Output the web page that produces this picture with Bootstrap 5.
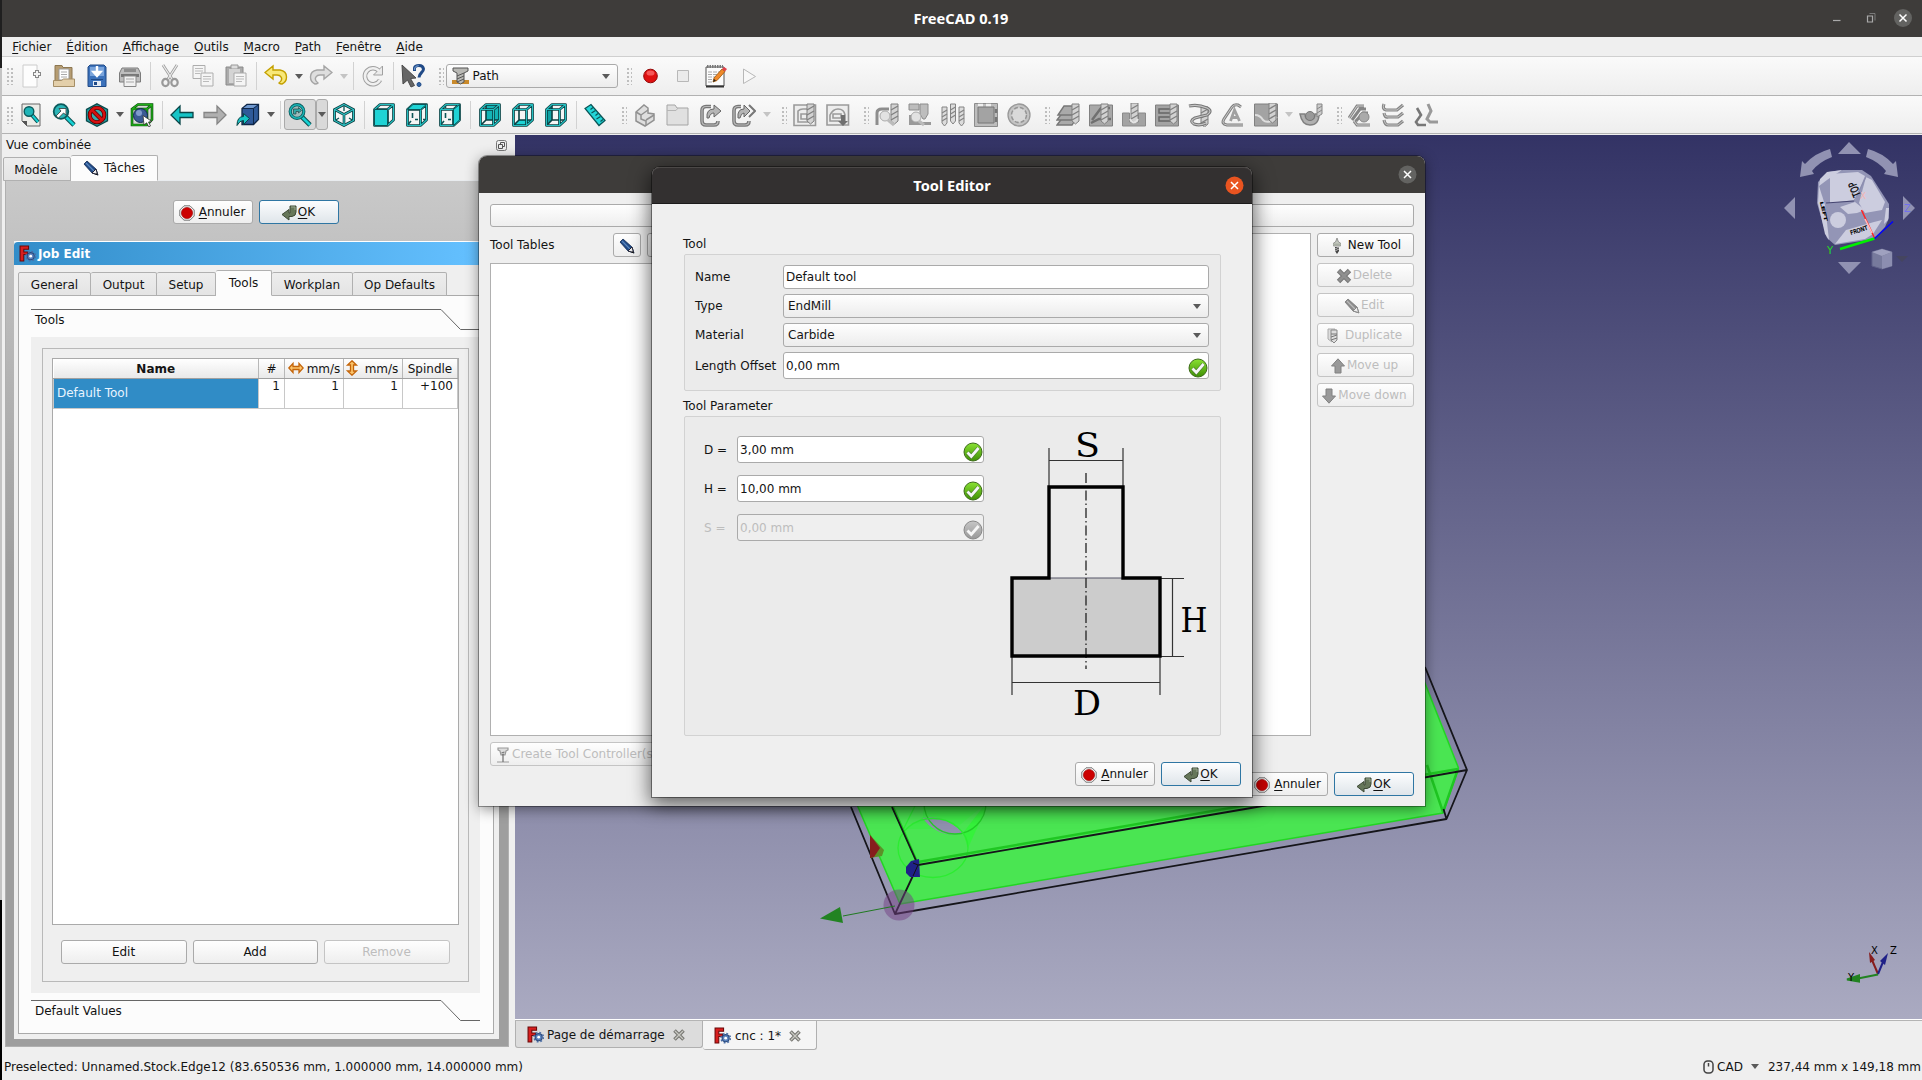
<!DOCTYPE html>
<html lang="fr">
<head>
<meta charset="utf-8">
<meta name="viewport" content="width=device-width, initial-scale=1">
<title>FreeCAD 0.19</title>
<link href="https://cdn.jsdelivr.net/npm/bootstrap@5.3.0/dist/css/bootstrap.min.css" rel="stylesheet">
<style>
html,body{height:100%;overflow:hidden}
body{font:12px/16px "DejaVu Sans",sans-serif;color:#141414;background:#efefef;width:1922px;height:1080px}
u{text-underline-offset:2px}
svg{display:block;flex:none}
.edge-strip{width:2px;background:linear-gradient(#1f1f1f 0 68px,#c4c4c4 68px 900px,#000 900px)}
.title-bar{height:37px;background:#3e3c3a;color:#fff;font:bold 14.6px/37px "Noto Sans",sans-serif;position:relative;text-align:center}
.menu-row{height:20px;border-bottom:1px solid #cfcfcf;padding-left:3px}
.menu-row span{padding:1px 7.7px 0 7.2px}
.tool-row{background:linear-gradient(#fafafa,#eee);border-bottom:1px solid #b2b2b2}
.tool-row.r1{height:39px}.tool-row.r2{height:38px}
.ic{width:33px;display:flex;justify-content:center;align-items:center;flex:none}
.ic svg{width:24px;height:24px}
.sp{width:7px;flex:none;height:28px;background:linear-gradient(#d2d2d2,#d2d2d2) 3px 0/1px 100% no-repeat}
.ar{width:12px;flex:none;display:flex;justify-content:center}
.ar::before,.caret::before{content:"";border:4px solid transparent;border-top:5px solid #5a5a5a;border-bottom:0}
.ar.off::before{border-top-color:#c4c4c4}
.hd{width:16px;flex:none;height:18px;background:radial-gradient(circle,#aaa 0 .6px,transparent 1px) 8px 0/4px 4px;background-clip:content-box;padding-left:8px;padding-right:2px}
.hd.first{width:12.5px;padding-left:4px;background-position:4px 0}
.pressed{background:#d9d9d9;border:1px solid #aaa;height:31px;border-radius:3px}
.qbtn.btn{height:24px;padding:1px 1px 0 0;font-size:12px;line-height:21px;border:1px solid #aaa;border-radius:3px;background:linear-gradient(#fefefe,#eee);color:#111;display:flex;align-items:center;justify-content:center;gap:1px;flex:none;opacity:1}
.qbtn.btn.off{color:#bdbdbd;border-color:#c4c4c4}
.qbtn.btn.dflt{border-color:#2f76a3;background:linear-gradient(#fcfdfe,#dfe5ea)}
.w80{width:80px}
.gap-icon{margin-right:3px}
.combo{border:1px solid #aaa;border-radius:3px;background:linear-gradient(#fefefe,#ececec);display:flex;align-items:center}
.caret{margin-left:auto;margin-right:7px;display:flex}
.fld{border:1px solid #aaa;border-radius:3px;background:#fff;display:flex;align-items:center;padding-left:2px}
.side{width:513px;flex:none}
.qtab{border:1px solid #b0b0b0;border-left-width:0;background:linear-gradient(#ededed,#e4e4e4);display:flex;align-items:center;justify-content:center;flex:none;height:24px;padding-top:1px;border-radius:2px 2px 0 0}
.qtab.first{border-left-width:1px}
.qtab.on{background:#fcfcfc;border-bottom-color:#fcfcfc;height:26px;padding:0 0 1px}
.task-area{border:1px solid #b0b0b0;background:linear-gradient(#c9c9c9,#9e9e9e 45%,#9e9e9e);height:867px;margin:0 6px 0 3px}
.job-head{height:24px;background:linear-gradient(90deg,#328dc9,#64c0ff 95%);border-top:1px solid #fff;border-radius:4px 4px 0 0;color:#fff;font-weight:bold;font-size:12px}
.job-card{width:485px;height:798px;background:#efefef;margin:17px 0 0 8px}
.pane{width:476px;height:739px;background:#fcfcfc;border:1px solid #aaa;margin:-1px 0 0 4px}
.page-box{width:449px;height:656px;background:#efefef;margin:7px 0 0 12px;padding:11px}
.page-frame{width:427px;height:634px;border:1px solid #b9b9b9;padding:9px}
.tool-table{width:407px;height:567px;background:#fff;border:1px solid #aaa}
.tool-table table{width:404px;table-layout:fixed;border-collapse:collapse}
.tool-table th{height:19px;border-right:1px solid #b8b8b8;border-bottom:1px solid #a0a0a0;background:linear-gradient(#fff,#e9e9e9);font-weight:normal;text-align:center;padding:1px 0 0;line-height:17px;white-space:nowrap}
.tool-table th svg{display:inline-block;vertical-align:-3px;margin-right:3px}
.tool-table td{height:30px;border:1px solid #c8c8c8;border-top:0;padding:0 4px 0 0;line-height:15px;text-align:right;vertical-align:top}
.tool-table td:first-child{background:#308cc6;color:#e8f4ff;text-align:left;vertical-align:middle;padding-left:3px}
.view-box{background:linear-gradient(#333365,#aaaac1)}
.doc-tabs{height:30px;border-top:1px solid #b4b4b4}
.doc-tab{border:1px solid #b0b0b0;border-top:0;height:27px;background:#dcdcdc;display:flex;align-items:center;flex:none;padding:1px 0 0 11px;border-radius:0 0 3px 3px}
.doc-tab.on{background:#f5f5f5;height:29px;border-left:0}
.status-row{height:30px;padding:3px 1px 0 2px}
.win{position:absolute;background:#efefef;border-radius:8px 8px 0 0}
.win-tables{left:479px;top:156px;width:946px;height:650px;box-shadow:0 0 0 1px rgba(0,0,0,.35),0 3px 14px rgba(0,0,0,.45)}
.win-tables .title-bar,.win-editor .title-bar{border-radius:8px 8px 0 0}
.win-editor{left:652px;top:167px;width:600px;height:630px;box-shadow:0 0 0 1px rgba(0,0,0,.4),0 6px 20px 2px rgba(0,0,0,.6)}
.win-editor .title-bar{background:#333030;border-bottom:1px solid #1c1b1b;box-shadow:inset 0 1px #4b4847}
.close-dot{position:absolute;right:8.5px;top:8.500px}
.win-ctl{position:absolute;right:10px;top:8px}
.whitebox{background:#fff;border:1px solid #b0b0b0}
.grp{background:#ebebeb;border:1px solid #d2d2d2;border-radius:2px;width:537px}
</style>
<script src="https://cdn.jsdelivr.net/npm/bootstrap@5.3.0/dist/js/bootstrap.bundle.min.js"></script>
</head>
<body class="d-flex">
<svg width="0" height="0" style="position:absolute" aria-hidden="true">
<defs>
<linearGradient id="grn" x2="0" y2="1"><stop stop-color="#8ae234"/><stop offset="1" stop-color="#3f8f04"/></linearGradient>
<linearGradient id="gry" x2="0" y2="1"><stop stop-color="#c6c6c6"/><stop offset="1" stop-color="#989898"/></linearGradient>
</defs>
<symbol id="i-stop" viewBox="0 0 16 16"><path d="M5 .8h6L15.200 5v6L11 15.200H5L.8 11V5z" fill="#f2f2f2" stroke="#777"/><circle cx="8" cy="8" r="5.600" fill="#cc0000" stroke="#900" stroke-width=".6"/></symbol>
<symbol id="i-ok" viewBox="0 0 16 16"><path d="M9 1h6v6q0 4-4 4.500H8v3.500L1 9.500l7-5V8h1z" fill="#66775a" stroke="#3e4a37"/><path d="M10 2h4v3" fill="none" stroke="#9aa890"/></symbol>
<symbol id="i-pencil" viewBox="0 0 16 16"><path d="M1 4l3-3 9 8 2 6-6-2z" fill="#204a87" stroke="#102a50" stroke-width=".8"/><path d="M3 3l8 8" stroke="#5a87bd" stroke-width="1.200"/><path d="M9 13l4-4 1.600 5.600z" fill="#eee" stroke="#223"/><path d="M13 13l2.500 2.500-3-1z" fill="#111"/></symbol>
<symbol id="i-pencilg" viewBox="0 0 16 16"><path d="M1 4l3-3 9 8 2 6-6-2z" fill="#8c8c8c" stroke="#777" stroke-width=".8"/><path d="M3 3l8 8" stroke="#bbb" stroke-width="1.200"/><path d="M9 13l4-4 1.600 5.600z" fill="#eee" stroke="#888"/></symbol>
<symbol id="i-fc" viewBox="0 0 16 16"><path d="M1 1h8v3H4.500v2.500H8V9H4.500v6H1z" fill="#d81e1e" stroke="#6b0808"/><circle cx="11" cy="10.500" r="3.300" fill="#5b82bd" stroke="#2b4a7c"/><circle cx="11" cy="10.500" r="4.400" fill="none" stroke="#4a6da5" stroke-width="1.500" stroke-dasharray="1.730 1.730"/><circle cx="11" cy="10.500" r="1.300" fill="#fff"/></symbol>
<symbol id="i-check" viewBox="0 0 20 20"><circle cx="10" cy="10" r="9" fill="url(#grn)" stroke="#3d6b1a"/><path d="M4.500 10.500l3.800 4 7.300-8.500" fill="none" stroke="#4a7a30" stroke-width="4"/><path d="M4.500 10.500l3.800 4 7.300-8.500" fill="none" stroke="#f6f6f6" stroke-width="2.800"/></symbol>
<symbol id="i-checkg" viewBox="0 0 20 20"><circle cx="10" cy="10" r="9" fill="url(#gry)" stroke="#888"/><path d="M4.500 10.500l3.800 4 7.300-8.500" fill="none" stroke="#f6f6f6" stroke-width="2.800"/></symbol>
<symbol id="i-x" viewBox="0 0 12 12"><path d="M1.500 1.500l9 9M10.500 1.500l-9 9" stroke="#777772" stroke-width="3.600"/><path d="M2 2l8 8M10 2l-8 8" stroke="#c8c8c2" stroke-width="1.300"/></symbol>
<symbol id="bit" viewBox="0 0 24 24"><path d="M14 1h7v17l-3.500 3L14 18z" fill="#d2d2d2" stroke="#808080"/><path d="M14 7l7-4M14 12l7-4M14 17l7-4" stroke="#808080" stroke-width="1.400"/></symbol>
<symbol id="wire" viewBox="0 0 24 24"><g fill="none" stroke-linejoin="round"><path d="M2.500 6.500h13v16h-13zM2.500 6.500l5.500-5h13.500v15.500l-6 5.500M15.500 6.500l6-5" stroke="#0a4042" stroke-width="2.700"/><path d="M2.500 6.500h13v16h-13zM2.500 6.500l5.500-5h13.500v15.500l-6 5.500M15.500 6.500l6-5" stroke="#25bfc1" stroke-width="1.100"/></g></symbol>
<symbol id="wireback" viewBox="0 0 24 24"><path d="M8 2v15h13M8 17l-5 5" fill="none" stroke="#0a4042" stroke-width="1.600"/></symbol>
</svg>

<div class="edge-strip"></div>
<div class="d-flex flex-column flex-grow-1">
  <header class="title-bar" style="padding-right:2px">FreeCAD 0.19
    <svg class="win-ctl" width="80" height="20" viewBox="0 0 80 20"><path d="M1 12.500h7.500" stroke="#aaa" stroke-width="1.200"/><path d="M35.500 8h5v6h-5z" fill="none" stroke="#aaa" stroke-width="1.200"/><path d="M37.500 5.500h5.500v7" fill="none" stroke="#888" stroke-width=".8"/><circle cx="71" cy="10" r="9" fill="#636361"/><path d="M67.500 6.500l7 7M74.500 6.500l-7 7" stroke="#fff" stroke-width="1.500"/></svg>
  </header>
  <nav class="menu-row d-flex align-items-center"><span><u>F</u>ichier</span><span><u>É</u>dition</span><span><u>A</u>ffichage</span><span><u>O</u>utils</span><span><u>M</u>acro</span><span><u>P</u>ath</span><span><u>F</u>enêtre</span><span><u>A</u>ide</span></nav>

  <div class="tool-row r1 d-flex align-items-center">
    <i class="hd first"></i>
    <span class="ic"><svg viewBox="0 0 24 24"><path d="M4 1h14v22H4z" fill="#fdfdfd" stroke="#ccc"/><path d="M18 6v8M14 10h8" stroke="#888" stroke-width="4"/><path d="M18 7v6M15 10h6" stroke="#f4f4f4" stroke-width="2"/></svg></span>
    <span class="ic"><svg viewBox="0 0 24 24"><path d="M3 1.500h7l1 2h9V20H3z" fill="#b59c72" stroke="#8d7750"/><path d="M7 5h10v11H7z" fill="#fff" stroke="#999"/><path d="M9 8h6M9 10.500h6M9 13h6" stroke="#aaa"/><path d="M1.500 22.500v-6h8l2-1.500h11v7.500z" fill="#e3cfaa" stroke="#a58e66"/></svg></span>
    <span class="ic"><svg viewBox="0 0 24 24"><path d="M3 3l2-2h14l2 2v19.500H3z" fill="#3c72bb" stroke="#204a87"/><path d="M5 3h14v9H5z" fill="#7aa4db"/><path d="M12 2v7M8.500 8l3.500 4 3.500-4z" fill="#fff" stroke="#fff" stroke-width="2.400"/><path d="M6 15.500h12" stroke="#204a87"/><path d="M8 17h8v5H8z" fill="#e6ecf5"/><path d="M9 18h3v3H9z" fill="#204a87"/></svg></span>
    <span class="ic"><svg viewBox="0 0 24 24"><path d="M4 4h16l2.500 5v9h-21V9z" fill="#bdbdbd" stroke="#7b7b7b"/><path d="M6 5h12v3H6z" fill="#8d8d8d"/><path d="M3 10h18v3H3z" fill="#777"/><path d="M6 12h12v10.500H6z" fill="#f1f1f1" stroke="#888"/><path d="M8 15h8M8 18h8" stroke="#ccc" stroke-width="2"/></svg></span>
    <i class="sp"></i>
    <span class="ic"><svg viewBox="0 0 24 24"><path d="M5 1l9 14M19 1l-9 14" stroke="#9d9d9d" stroke-width="2.800"/><path d="M5 1l9 14M19 1l-9 14" stroke="#eee" stroke-width="1.200"/><g fill="none" stroke="#999" stroke-width="2.200"><ellipse cx="7.500" cy="18.500" rx="3.200" ry="3.600"/><ellipse cx="16.500" cy="18.500" rx="3.200" ry="3.600"/></g></svg></span>
    <span class="ic"><svg viewBox="0 0 24 24"><g fill="#f5f5f5" stroke="#adadad"><path d="M2 1.500h12v13H2z"/><path d="M10 9h12v13H10z"/></g><path d="M4 4.500h8M4 7h8M4 9.500h5M12 12.500h8M12 15h8M12 17.500h6" stroke="#bbb"/></svg></span>
    <span class="ic"><svg viewBox="0 0 24 24"><path d="M2 3h17v18H2z" fill="#ababab" stroke="#8a8a8a"/><path d="M7 1h7v4H7z" fill="#ddd" stroke="#999"/><path d="M5 5h11v14H5z" fill="#d4d4d4"/><path d="M10 9h12v13H10z" fill="#f5f5f5" stroke="#aaa"/><path d="M12 12.500h8M12 15h8M12 17.500h6" stroke="#bbb"/></svg></span>
    <i class="sp"></i>
    <span class="ic"><svg viewBox="0 0 24 24"><path d="M1 8.500L9 2v4h7q6.500 1 6.500 7 0 5-4.500 7-2 0-3-1 4-3 2-6-1-2-4-2H9v4z" fill="#f8e878" stroke="#c4a000" stroke-width="1.400"/></svg></span>
    <i class="ar"></i>
    <span class="ic"><svg viewBox="0 0 24 24"><path d="M23 8.500L15 2v4H8q-6.500 1-6.500 7 0 5 4.500 7 2 0 3-1-4-3-2-6 1-2 4-2h4v4z" fill="#dedede" stroke="#a5a5a5" stroke-width="1.400"/></svg></span>
    <i class="ar off"></i><i class="sp"></i>
    <span class="ic"><svg viewBox="0 0 24 24"><path d="M19 16a8 8 0 1 1-1-9" fill="none" stroke="#a0a0a0" stroke-width="4.600"/><path d="M21.500 2v9h-9z" fill="#ebebeb" stroke="#a0a0a0"/><path d="M19 16a8 8 0 1 1-1-9" fill="none" stroke="#f0f0f0" stroke-width="2.600"/></svg></span>
    <i class="sp"></i>
    <span class="ic"><svg viewBox="0 0 24 24"><path d="M1 1l14 13-5.500.500 4 7-3.500 1.500-3.500-7-4.500 4z" fill="#666" stroke="#4a4a4a"/><path d="M13.500 7V4q.500-2.500 4.500-2.500t4.500 3.500c0 3.500-4.500 4-4.500 8.500" fill="none" stroke="#204a87" stroke-width="3"/><path d="M13.700 6V4q.500-2.300 4-2.300" fill="none" stroke="#7da7dc" stroke-width="1"/><circle cx="18" cy="20.500" r="2" fill="#3465a4" stroke="#204a87"/></svg></span>
    <i class="hd"></i>
    <div class="combo" style="width:172px;height:24px"><svg width="17" height="18" viewBox="0 0 17 18" style="margin:0 4px 0 5px"><path d="M0 13h17v4H0z" fill="#c98a2b"/><path d="M1 1h15v3l-4 2v9l-3.500 2L5 15V6L1 4z" fill="#b9b9b5" stroke="#555"/><path d="M5 9l7-3M5 12l7-3M5 15l7-3" stroke="#555"/></svg>Path<i class="caret"></i></div>
    <i class="hd"></i>
    <span class="ic"><svg viewBox="0 0 24 24"><circle cx="12.500" cy="12" r="6.800" fill="#df1010" stroke="#930707"/><ellipse cx="12.500" cy="9" rx="4" ry="2.600" fill="#f77" opacity=".7"/></svg></span>
    <span class="ic"><svg viewBox="0 0 24 24"><path d="M6.500 6.500h11v11h-11z" fill="#ebebeb" stroke="#b8b8b8"/></svg></span>
    <span class="ic"><svg viewBox="0 0 24 24"><path d="M2 3h18v19H2z" fill="#fcfcfc" stroke="#555"/><path d="M2 22.500h18" stroke="#333" stroke-width="2"/><path d="M3 2.500h16" stroke="#777" stroke-width="3" stroke-dasharray="1.500 1"/><path d="M4 8h13M4 10.500h13M4 13h10M4 15.500h9M4 18h5" stroke="#aaa" stroke-dasharray="4 1"/><path d="M9 18l1-4 8-9 3 2.500-8 9z" fill="#f0892a" stroke="#9a5708" stroke-width=".8"/><path d="M18 5l2-2 3 2-2 2.500z" fill="#e2404a"/><path d="M9 18l1-3 2 1.500z" fill="#222"/></svg></span>
    <span class="ic"><svg viewBox="0 0 24 24"><path d="M6.500 5v14.500l12-7z" fill="#f8f8f8" stroke="#b8b8b8"/></svg></span>
  </div>

  <div class="tool-row r2 d-flex align-items-center">
    <i class="hd first"></i>
    <span class="ic"><svg viewBox="0 0 24 24"><path d="M3 1h18v22H8l-5-5z" fill="#ecece8" stroke="#666"/><path d="M3 18h5v5" fill="#555"/><path d="M13 12l6 7" stroke="#0b4a4c" stroke-width="4"/><path d="M13 12l6 7" stroke="#16d0d2" stroke-width="2"/><circle cx="10" cy="8.500" r="4.800" fill="#1fb4b6" stroke="#0b5a5c" stroke-width="1.400"/></svg></span>
    <span class="ic"><svg viewBox="0 0 24 24"><path d="M14 14l8 8" stroke="#0b4a4c" stroke-width="4.600"/><path d="M14 14l8 8" stroke="#16d0d2" stroke-width="2.600"/><circle cx="9" cy="8.500" r="7.300" fill="#2bb5b7" stroke="#0b5a5c" stroke-width="1.800"/><path d="M4 13l5-5-2-2.500h7V12l-2.500-2-5 5z" fill="#fff" stroke="#333" stroke-width=".8"/></svg></span>
    <span class="ic"><svg viewBox="0 0 24 24"><path d="M12 .8l10.500 5.500v11.500L12 23.300 1.500 17.800V6.300z" fill="#1fa3a5" stroke="#0b4a4c" stroke-width="1.300"/><circle cx="12" cy="12" r="7.300" fill="#38a9ab" stroke="#5b0000" stroke-width="4"/><path d="M7 7l10 10" stroke="#5b0000" stroke-width="4.200"/><circle cx="12" cy="12" r="7.300" fill="none" stroke="#d61010" stroke-width="2.400"/><path d="M7 7l10 10" stroke="#d61010" stroke-width="2.600"/></svg></span>
    <i class="ar"></i>
    <span class="ic"><svg viewBox="0 0 24 24"><path d="M2 6l6-4.500h14v15l-5 5.500H2z" fill="#d8ddd8"/><path d="M2 6l6-4.500h14v15l-5 5.500H2zM2 6h15v16M17 6l5-4.500" fill="none" stroke="#0f4a10" stroke-width="2.600"/><path d="M2 6l6-4.500h14v15l-5 5.500H2zM2 6h15v16M17 6l5-4.500" fill="none" stroke="#1eb017" stroke-width="1.300"/><circle cx="10.500" cy="12.500" r="7" fill="#3b5b95" stroke="#13294f"/><circle cx="9" cy="10" r="3" fill="#819bcc"/><path d="M13 12.500l9 6-3.500.500 2 4-1.800.800-2-4-2.700 2z" fill="#fff" stroke="#333" stroke-width=".8"/></svg></span>
    <i class="sp"></i>
    <span class="ic"><svg viewBox="0 0 24 24"><path d="M1 12l9-9v6.500h13v5H10V21z" fill="#16c4c6" stroke="#0a4547" stroke-width="1.300"/></svg></span>
    <span class="ic"><svg viewBox="0 0 24 24"><path d="M23 12l-9-9v6.500H1v5h13V21z" fill="#b0b0b0" stroke="#858585" stroke-width="1.300"/></svg></span>
    <span class="ic"><svg viewBox="0 0 24 24"><path d="M6 5.500l5-4h11.500v15l-5 5H6z" fill="#2f5a99" stroke="#0f2748" stroke-width="1.300"/><path d="M6 5.500h11.500v16M17.500 5.500l5-4" stroke="#0f2748" fill="none"/><path d="M7.500 5l4-3h9.500l-4 3z" fill="#6f98cf"/><path d="M1 22.500q0-9 6.500-9v-3l6 5-6 6v-4q-4 0-6.500 5z" fill="#16c4c6" stroke="#0a4547"/></svg></span>
    <i class="ar"></i><i class="sp"></i>
    <span class="ic pressed" style="width:32px"><svg viewBox="0 0 24 24"><path d="M14 14l8 8" stroke="#0b4a4c" stroke-width="4.600"/><path d="M14 14l8 8" stroke="#16d0d2" stroke-width="2.600"/><circle cx="9" cy="8.500" r="6.800" fill="#9fbcbc" stroke="#0b5a5c" stroke-width="3.200"/><circle cx="9" cy="8.500" r="6.800" fill="none" stroke="#19b5b7" stroke-width="1.600"/><path d="M5.500 6h5V4.500l3 3-3 2.500V8.500H8v2.500H5.500z" fill="#3aa" stroke="#244" stroke-width=".7"/></svg></span>
    <i class="ar pressed align-items-center"></i>
    <span class="ic"><svg viewBox="0 0 24 24"><path d="M12 1.500l9.500 5v11l-9.500 5-9.500-5v-11z" fill="#f6f6f6" stroke="#0a3a3c" stroke-width="2.800"/><path d="M2.500 6.500l9.500 5 9.500-5M12 11.500v11" fill="none" stroke="#0a3a3c" stroke-width="2.600"/><path d="M7 15l-4 2.500M17 15l4 2.500M12 3v5" stroke="#0a5557" stroke-width="1.300"/><path d="M12 1.500l9.500 5v11l-9.500 5-9.500-5v-11zM2.500 6.500l9.500 5 9.500-5M12 11.500v11" fill="none" stroke="#2fc3c5" stroke-width="1.200"/></svg></span>
    <i class="sp"></i>
    <span class="ic"><svg viewBox="0 0 24 24"><path d="M3 7l5-5h13v15l-5 5" fill="#f5f5f5"/><use href="#wire"/><path d="M2.500 6.500h13v16h-13z" fill="#1fd3d5" stroke="#0b5557"/></svg></span>
    <span class="ic"><svg viewBox="0 0 24 24"><path d="M3 7h13l5-5v15l-5 5H3z" fill="#f5f5f5"/><use href="#wire"/><path d="M7.500 10v5M6 18l-3 3.500M10 16.500h3M18 16.500h2" stroke="#0b5557" fill="none" stroke-width="1.600"/><path d="M2.500 6.500l5.500-5h13.500l-6 5z" fill="#1fd3d5" stroke="#0b5557"/></svg></span>
    <span class="ic"><svg viewBox="0 0 24 24"><path d="M3 7l5-5h13l-5 5v15H3z" fill="#f5f5f5"/><use href="#wire"/><path d="M7.500 3v2M7.500 10v5M6 18l-3 3.500M10 16.500h3" stroke="#0b5557" fill="none" stroke-width="1.600"/><path d="M15.500 6.500l6-5v15.500l-6 5.500z" fill="#1fd3d5" stroke="#0b5557"/></svg></span>
    <i class="sp"></i>
    <span class="ic"><svg viewBox="0 0 24 24"><path d="M3 7l5-5h13v15l-5 5H3z" fill="#f5f5f5"/><path d="M8 2h13v15H8z" fill="#13b4b6"/><use href="#wireback"/><use href="#wire"/></svg></span>
    <span class="ic"><svg viewBox="0 0 24 24"><path d="M3 7l5-5h13v15l-5 5H3z" fill="#f5f5f5"/><path d="M3 22l5-5h13l-5 5z" fill="#1fd3d5"/><use href="#wireback"/><use href="#wire"/></svg></span>
    <span class="ic"><svg viewBox="0 0 24 24"><path d="M3 7l5-5h13v15l-5 5H3z" fill="#f5f5f5"/><path d="M3 7l5-5v15l-5 5z" fill="#0fa0a2"/><use href="#wireback"/><use href="#wire"/></svg></span>
    <i class="sp"></i>
    <span class="ic"><svg viewBox="0 0 24 24"><path d="M1 5.500l6-4 14 16-6 5z" fill="#22d6d8" stroke="#0b5557" stroke-width="1.300"/><path d="M9 4.500l-2.500 2M11.500 7.500l-4 2.500M14 10.500l-2.500 2M16.500 13.500l-4 2.500M19 16.500l-2.500 2" stroke="#0b5557" stroke-width="1.200"/></svg></span>
    <i class="hd"></i>
    <span class="ic"><svg viewBox="0 0 24 24"><g fill="#dedede" stroke="#919191" stroke-width="1.500"><path d="M3 9l8-7 4 3v5l6 1v6l-9 6-9-5z"/><path d="M3 9l5 3v4l5 2v4M8 12l7-5M13 17l8-5" fill="none"/></g></svg></span>
    <span class="ic"><svg viewBox="0 0 24 24"><path d="M1 2h8l2 3h11v17H1z" fill="#e0e0e0" stroke="#a5a5a5"/><path d="M1 7.500h9l2-2.500" stroke="#b5b5b5" fill="none"/></svg></span>
    <span class="ic"><svg viewBox="0 0 24 24"><path d="M12 3.500H7q-4 0-4 4V18q0 4 4 4h8q4 0 4-4" fill="none" stroke="#777" stroke-width="3.600"/><path d="M12 3.500H7q-4 0-4 4V18q0 4 4 4h8q4 0 4-4" fill="none" stroke="#bbb" stroke-width="1.200"/><path d="M8 15q-1-9 7-9V2l7 6-7 6v-4q-4 0-5 5z" fill="#b5b5b5" stroke="#666"/></svg></span>
    <span class="ic"><svg viewBox="0 0 24 24"><path d="M9 3.500H6q-4 0-4 4V18q0 4 4 4h7q4 0 4-4" fill="none" stroke="#777" stroke-width="3.600"/><path d="M9 3.500H6q-4 0-4 4V18q0 4 4 4h7q4 0 4-4" fill="none" stroke="#bbb" stroke-width="1.200"/><path d="M6 15q-1-9 6-9V2l6 6-6 6v-4q-3 0-4 5z" fill="#b5b5b5" stroke="#666"/><path d="M17 2l6 6-6 6" fill="none" stroke="#777" stroke-width="2"/></svg></span>
    <i class="ar off"></i><i class="hd"></i>
    <span class="ic"><svg viewBox="0 0 24 24"><g fill="#ededed" stroke="#9a9a9a" stroke-width="1.600"><path d="M1 2h21.500v20.500H1z"/><path d="M5 19V8q2-2 5-2h9v13z"/><path d="M8 16v-5h6v5z"/></g><use href="#bit"/></svg></span>
    <span class="ic"><svg viewBox="0 0 24 24"><g fill="#ededed" stroke="#9a9a9a" stroke-width="1.600"><path d="M1 2h21.500v20H1z"/><path d="M4 18v-6q3-6 8-6 6 0 7 6v6z"/><path d="M7 15v-4h8v4z"/></g><path d="M15 12h4v6h3l-5 5-5-5h3z" fill="#707070"/></svg></span>
    <i class="hd"></i>
    <span class="ic"><svg viewBox="0 0 24 24"><path d="M2 22V10q0-4 5-4h7" fill="none" stroke="#8d8d8d" stroke-width="3"/><use href="#bit" x="2"/><circle cx="10" cy="13" r="5" fill="#e2e2e2" stroke="#aaa"/><path d="M13 17l6 5" stroke="#bbb" stroke-width="3"/></svg></span>
    <span class="ic"><svg viewBox="0 0 24 24"><path d="M1 1h10v6H1zM12 1h8v10l-3 5h-2l-3-5z" fill="#bdbdbd" stroke="#8c8c8c"/><path d="M1 12h5v7h17v3H1z" fill="#999"/><circle cx="8" cy="14" r="5" fill="#e2e2e2" stroke="#aaa"/><path d="M11 18l5 4" stroke="#bbb" stroke-width="3"/></svg></span>
    <span class="ic"><svg viewBox="0 0 24 24"><g fill="#dcdcdc" stroke="#848484"><path d="M1 4h5v16l-2.500 3L1 20zM9.500 1h5v17L12 21l-2.500-3zM18 4h5v16l-2.500 3L18 20z"/><path d="M1 10l5-3M1 14l5-3M1 18l5-3M9.500 7l5-3M9.500 11l5-3M9.500 15l5-3M18 10l5-3M18 14l5-3M18 18l5-3" stroke-width="1.200"/></g></svg></span>
    <span class="ic"><svg viewBox="0 0 24 24"><path d="M.500 .5h23v23H.500z" fill="#bdbdbd" stroke="#8c8c8c"/><path d="M4 4h16v16H4z" fill="#a3a3a3" stroke="#777"/><path d="M4 2h5M12 2h5" stroke="#eee" stroke-width="2.500"/><path d="M22 6v4M22 14v5" stroke="#777" stroke-width="2.500"/></svg></span>
    <span class="ic"><svg viewBox="0 0 24 24"><circle cx="12" cy="12" r="11" fill="#c4c4c4" stroke="#999" stroke-width="1.300"/><circle cx="12" cy="12" r="7.500" fill="#d9d9d9" stroke="#959595" stroke-width="1.500" stroke-dasharray="4 2"/></svg></span>
    <i class="hd"></i>
    <span class="ic"><svg viewBox="0 0 24 24"><g fill="#aaa" stroke="#777" stroke-width="1.400"><path d="M1 22l6-8h14l-5 8z"/><path d="M1 17l6-8h14l-5 8z"/><path d="M2 12l6-9h12l-4 9z"/></g><use href="#bit" x="2"/></svg></span>
    <span class="ic"><svg viewBox="0 0 24 24"><path d="M.500 2h23v21H.500z" fill="#a8a8a8" stroke="#808080"/><path d="M3 17L12 5l9 0M2 20l8-4h12" fill="none" stroke="#707070" stroke-width="2.500"/><use href="#bit" x="-2"/></svg></span>
    <span class="ic"><svg viewBox="0 0 24 24"><path d="M.500 10h7v9h9v-9h7v13H.500z" fill="#a3a3a3" stroke="#8a8a8a"/><use href="#bit" x="-5" y="-1"/><path d="M8 16q4 7 8 0" fill="none" stroke="#e5e5e5" stroke-width="2"/></svg></span>
    <span class="ic"><svg viewBox="0 0 24 24"><path d="M.500 2h23v21H.500z" fill="#a3a3a3" stroke="#808080"/><path d="M16 6H4v4h12M16 14H4v4h12" fill="none" stroke="#666" stroke-width="1.500"/><use href="#bit" x="1"/></svg></span>
    <span class="ic"><svg viewBox="0 0 24 24"><use href="#bit" x="-1" y="3"/><path d="M1 3q9-2 18 2 6 3 0 7-5 1-12 3-6 3-1 6 6 2 12-1" fill="none" stroke="#777" stroke-width="3.200"/><path d="M1 3q9-2 18 2 6 3 0 7-5 1-12 3-6 3-1 6 6 2 12-1" fill="none" stroke="#c5c5c5" stroke-width="1.200"/></svg></span>
    <span class="ic"><svg viewBox="0 0 24 24"><path d="M22 22H6q-6-1-3-6l8-12q2-3 6-2l3 2" fill="none" stroke="#808080" stroke-width="3"/><path d="M22 22H6q-6-1-3-6l8-12q2-3 6-2l3 2" fill="none" stroke="#ccc" stroke-width="1"/><path d="M9.500 18l4-11 5 11M11 14.500h6" fill="none" stroke="#a0a0a0" stroke-width="2.800"/></svg></span>
    <span class="ic"><svg viewBox="0 0 24 24"><path d="M.500 1h23v22H.500z" fill="#a3a3a3" stroke="#808080"/><path d="M1 12q5 0 8 5 3 3 8 1l6-4" fill="none" stroke="#ddd" stroke-width="2"/><use href="#bit" y="-1" x="1"/></svg></span>
    <i class="ar off"></i>
    <span class="ic"><svg viewBox="0 0 24 24"><path d="M1 11h5q0 6 5 6t5-6h4q0 11-9 11-8 0-10-11z" fill="#b0b0b0" stroke="#808080" stroke-width="1.400"/><circle cx="11" cy="13" r="4.500" fill="#999" stroke="#777"/><path d="M18 1h5v10l-5 3z" fill="#ccc" stroke="#888"/><path d="M18 6l5-3M18 10l5-3" stroke="#888"/></svg></span>
    <i class="hd"></i>
    <span class="ic"><svg viewBox="0 0 24 24"><g fill="none" stroke="#858585" stroke-width="3"><path d="M22 22H9l-3-4M1 15l8-12h7M4 17l8-11h6M8 18l7-8h5"/></g><path d="M22 22H9l-3-4M1 15l8-12h7" fill="none" stroke="#ccc"/><circle cx="16" cy="14" r="5" fill="#aaa" stroke="#888"/></svg></span>
    <span class="ic"><svg viewBox="0 0 24 24"><g fill="none" stroke="#858585" stroke-width="3.200"><path d="M3 1Q1 6 5 7h11l6-5M3 10q1 5 4 4h10l5-4M3 17q1 5 4 5h10l5-4"/></g><g fill="none" stroke="#c5c5c5" stroke-width="1"><path d="M3 1Q1 6 5 7h11l6-5M3 10q1 5 4 4h10l5-4M3 17q1 5 4 5h10l5-4"/></g></svg></span>
    <span class="ic"><svg viewBox="0 0 24 24"><g fill="none" stroke="#777" stroke-width="3"><path d="M3 5l4 7-5 7 2 3h8" stroke-width="2.600"/><path d="M14 1l3 7-4 8 3 3h8" stroke="#999"/></g></svg></span>
  </div>

  <main class="d-flex" style="height:916px">
    <aside class="side">
      <div class="d-flex align-items-center justify-content-between" style="height:20px;padding:2px 8px 0 4px"><span>Vue combinée</span><svg width="11" height="11" viewBox="0 0 11 11"><rect x=".5" y=".5" width="10" height="10" rx="2" fill="none" stroke="#777"/><path d="M2.500 4.500h4v4h-4zM4.500 4V2.500h4v4H7" fill="none" stroke="#555"/></svg></div>
      <div class="d-flex align-items-end" style="height:27px;margin-bottom:-1px;padding-left:1px">
        <div class="qtab first" style="width:68px;padding-right:2px">Modèle</div><div class="qtab on" style="width:87px"><svg width="16" height="16" style="margin-right:5px"><use href="#i-pencil"/></svg>Tâches</div><div class="flex-grow-1 border-bottom border-secondary-subtle"></div>
      </div>
      <div class="task-area">
        <div class="d-flex justify-content-center" style="gap:6px;padding:19px 3px 0 0">
          <button class="btn qbtn w80"><svg width="16" height="16" class="gap-icon"><use href="#i-stop"/></svg><span><u>A</u>nnuler</span></button>
          <button class="btn qbtn dflt w80"><svg width="16" height="16"><use href="#i-ok"/></svg><span><u>O</u>K</span></button>
        </div>
        <div class="job-card">
          <div class="job-head d-flex align-items-center"><svg width="17" height="17" style="margin:0 2px 0 5px"><use href="#i-fc"/></svg>Job Edit</div>
          <div class="d-flex align-items-end" style="height:31px;padding-left:4px">
            <div class="qtab first" style="width:73px">General</div><div class="qtab" style="width:66px">Output</div><div class="qtab" style="width:59px">Setup</div><div class="qtab on" style="width:56px">Tools</div><div class="qtab" style="width:81px">Workplan</div><div class="qtab" style="width:94px">Op Defaults</div>
          </div>
          <div class="pane">
            <div style="height:34px;padding:13px 0 0 12px"><svg width="449" height="21" viewBox="0 0 449 21"><path d="M0 .5h410L429.500 20.500H449" fill="none" stroke="#666"/><text x="4" y="15" font-size="12" fill="#111">Tools</text></svg></div>
            <div class="page-box"><div class="page-frame">
              <div class="tool-table"><table>
                <colgroup><col style="width:205px"><col style="width:26px"><col style="width:59px"><col style="width:59px"><col style="width:55px"></colgroup>
                <tr><th><b>Name</b></th><th>#</th><th><svg width="16" height="16" viewBox="0 0 16 16"><path d="M.8 8L5 3.500v3h6v-3L15.200 8 11 12.500v-3H5v3z" fill="#fcc46a" stroke="#c4650a" stroke-width="1.300"/></svg>mm/s</th><th><svg width="16" height="16" viewBox="0 0 16 16" style="margin-right:5px;margin-left:-4px"><path d="M8 .8l4.500 4.200h-3v6h3L8 15.200 3.500 11h3V5h-3z" fill="#fcc46a" stroke="#c4650a" stroke-width="1.300"/></svg>mm/s</th><th>Spindle</th></tr>
                <tr><td>Default Tool</td><td>1</td><td>1</td><td>1</td><td>+100</td></tr>
              </table></div>
              <div class="d-flex" style="gap:6px;padding:15px 0 0 9px"><button class="btn qbtn" style="width:126px">Edit</button><button class="btn qbtn" style="width:125px">Add</button><button class="btn qbtn off" style="width:126px">Remove</button></div>
            </div></div>
            <div style="padding:7px 0 0 12px"><svg width="449" height="21" viewBox="0 0 449 21"><path d="M0 .5h410L429.500 20.500H449" fill="none" stroke="#666"/><text x="4" y="15" font-size="12" fill="#111">Default Values</text></svg></div>
          </div>
        </div>
      </div>
    </aside>

    <section class="flex-grow-1 d-flex flex-column" style="padding-top:1px">
      <div class="view-box" style="height:884px">
        <svg width="1407" height="884" viewBox="515 135 1407 884">
          <g stroke-linejoin="round">
            <path d="M1400 620L1458.500 768 1443 813 900 904 858 807 840 760 1300 600z" fill="#4ae552" stroke="#22d622" stroke-width="1.500"/>
            <path d="M923 817l-16 12h48l30-25h-62z" fill="#33f33a" opacity=".4"/>
            <path d="M923 818q17-2 27 5 8 4 12 10-14 4-26-3-9-5-13-12z" fill="#9090ae"/>
            <path d="M968 848l18-40-3-1-20 26z" fill="#2ff536" opacity=".8"/>
            <g fill="none" stroke="#2cec31" stroke-width="1.300"><circle cx="955" cy="803" r="31" stroke="#23cc27"/><ellipse cx="933" cy="848" rx="35" ry="29.500"/><path d="M903 830l12-24"/></g>
            <path d="M918 862L1300 796 1458 769M893 807l24 55M1427 765l16 47 15-43" fill="none" stroke="#1fc722" stroke-width="2.500"/>
            <g fill="none" stroke="#15151a" stroke-width="1.800"><path d="M1425 667L1467 770 1446.500 819 895 914 851 807M918 865L1251 808 1467 770M892 807l26 58-23 49M1446.500 819l-3-10"/></g>
            <path d="M870 835l14 15-2 6-12 2z" fill="#5c8f28"/><path d="M870 835l10 13-6 9-4 1z" fill="#861d1d"/>
            <path d="M906 867l5-6 8-2 1 18-10 0-4-4z" fill="#1f2087"/><path d="M913 863l5 2 3-.500M918 865l-5 11" stroke="#111" fill="none"/>
            <circle cx="899" cy="905" r="15.500" fill="#743f83" opacity=".5"/>
            <path d="M895 906l-52 10" stroke="#207a20"/><path d="M820 918.500l20-11.500 3 16z" fill="#228322"/>
          </g>
          <g fill="#9192b2">
            <path d="M1849 142l-11 12h23zM1784 208l11-11v22zM1915 208l-12-12v24zM1849 274l-11-12h23z"/>
            <path d="M1830 149l2 8q-13 5-20 14l2 3-14 3 2-16 3 3q10-11 25-15zM1868 149l-2 8q13 5 20 14l-2 3 14 3-2-16-3 3q-10-11-25-15z"/>
          </g>
          <path d="M1828 172l15-2h19l9 6 18 28v14l-4 9-11 12-39 6-8-7-10-35 1-21z" fill="#9395b6"/>
          <g fill="#cccddf"><path d="M1830 174l28-2 7 4-5 12-5 12-25 3z"/><path d="M1866 177l6 3 13 22-3 8-17 3-6-10z"/><path d="M1819 186l6 19 4 35-4-6-7-31z"/><path d="M1846 230l28-8 8-2-9 14-8 5-30 5z"/><circle cx="1838" cy="220" r="8"/><path d="M1840 207l15-5 10 8-8 3-9 1z"/><path d="M1886 208l3 0-1 12-4 4zM1827 172l15-2-3 2-12 8-8 6 1-7z"/></g>
          <path d="M1826 203l28-2" fill="none" stroke="#444470" stroke-width="1.200"/><path d="M1854 201l12-24" stroke="#8a8bad" stroke-width="1"/>
          <g fill="#000" stroke="#000" stroke-width=".3"><text transform="translate(1861 195) rotate(-112) scale(-1 1) translate(-16 0) scale(-1 1) translate(-16 0)" textLength="15" lengthAdjust="spacingAndGlyphs" font-size="11">TOP</text><text transform="translate(1851 235) rotate(-18)" textLength="18" lengthAdjust="spacingAndGlyphs" font-size="6">FRONT</text><text transform="translate(1820 202) rotate(76)" textLength="20" lengthAdjust="spacingAndGlyphs" font-size="4">LEFT</text></g>
          <path d="M1861.500 210l13 28" stroke="#f22" stroke-width="1.500"/><path d="M1865 219l7 14" stroke="#fbb" stroke-width="1.500"/><path d="M1874.500 238.500L1840 249" stroke="#00f000" stroke-width="2.500"/><path d="M1874.500 238.500L1893 221.500" stroke="#00f" stroke-width="1.500"/>
          <g font-size="10"><text x="1827" y="254" fill="#1fdd1f">Y</text><text x="1904" y="212" fill="#7070ee">Z</text><text x="1860" y="199" fill="#f2b6b6" font-size="9">X</text></g>
          <path d="M1872 252l10-3 10 3v14l-10 3-10-3z" fill="#777a9c" stroke="#60628a"/><path d="M1872 252l10-3 10 3-10 4z" fill="#9fa1bf"/><path d="M1882 256l10-4v14l-10 3z" fill="#8c8eb0"/><path d="M1896 256h12l-6 6z" fill="#45455f"/>
          <g stroke-width="2"><path d="M1878 974l-6-14" stroke="#861d1d"/><path d="M1869 952l6 8-5 3z" fill="#861d1d"/><path d="M1878 974l5-12" stroke="#1f2087"/><path d="M1888 953l-8 8 5 4z" fill="#1f2087"/><path d="M1878 974.500l-20 4" stroke="#228322"/><path d="M1847 979.500l12-4v6z" fill="#228322" stroke="#228322"/></g>
          <g font-size="10" fill="#000"><text x="1871" y="954">X</text><text x="1890" y="954">Z</text><text x="1848" y="981">Y</text></g>
        </svg>
      </div>
      <div class="bg-white" style="height:1px"></div>
      <div class="doc-tabs d-flex align-items-start">
        <div class="doc-tab" style="width:188px"><svg width="17" height="17" style="margin-right:3px"><use href="#i-fc"/></svg>Page de démarrage<svg width="12" height="12" class="ms-2"><use href="#i-x"/></svg></div>
        <div class="doc-tab on" style="width:114px"><svg width="17" height="17" class="me-1"><use href="#i-fc"/></svg>cnc : 1*<svg width="12" height="12" class="ms-2"><use href="#i-x"/></svg></div>
      </div>
    </section>
  </main>

  <footer class="status-row d-flex align-items-center"><span>Preselected: Unnamed.Stock.Edge12 (83.650536 mm, 1.000000 mm, 14.000000 mm)</span>
    <svg class="ms-auto" width="11" height="14" viewBox="0 0 11 14"><rect x="1" y="1" width="9" height="12" rx="3.500" fill="none" stroke="#444" stroke-width="1.500"/><path d="M5.500 3v3.500" stroke="#444" stroke-width="1.500"/></svg><span style="margin:0 6px 0 3px">CAD</span><i class="ar"></i><span style="margin-left:7px">237,44 mm x 149,18 mm</span></footer>
</div>

<div class="win win-tables">
  <div class="title-bar"><svg class="close-dot" width="19" height="19" viewBox="0 0 19 19"><circle cx="9.500" cy="9.500" r="9" fill="#636361"/><path d="M6 6l7 7M13 6l-7 7" stroke="#fff" stroke-width="1.500"/></svg></div>
  <div class="d-flex flex-column" style="padding:11px 11px 0;gap:6px">
    <button class="btn qbtn" style="height:23px"></button>
    <div class="d-flex" style="height:503px;gap:6px">
      <div class="d-flex flex-column" style="width:300px;gap:6px">
        <div class="d-flex align-items-center" style="gap:6px"><span style="width:117px">Tool Tables</span><button class="btn qbtn" style="width:28px"><svg width="16" height="16"><use href="#i-pencil"/></svg></button><button class="btn qbtn" style="width:28px"></button></div>
        <div class="whitebox flex-grow-1"></div>
      </div>
      <div class="whitebox flex-grow-1"></div>
      <div class="d-flex flex-column" style="width:97px;gap:6px">
        <button class="btn qbtn"><svg width="16" height="16" viewBox="0 0 16 16" style="margin-right:2px"><path d="M8 0l1.500 4 2 1v3h-7V5l2-1z" fill="#c5c9bf" stroke="#777" stroke-width=".7"/><path d="M4 5.500h8v2H4z" fill="#aab0a5"/><path d="M6 9h4v4l-2 3-2-3z" fill="#444"/><path d="M6 11l4-2M6 13l4-2" stroke="#bbb"/></svg>New Tool</button>
        <button class="btn qbtn off" style="padding-right:3px"><svg width="16" height="16" viewBox="0 0 16 16"><path d="M2.500 2.500l11 11M13.500 2.500l-11 11" stroke="#777" stroke-width="4.800"/><path d="M3 3l10 10M13 3L3 13" stroke="#8f8f8f" stroke-width="2.800"/></svg>Delete</button>
        <button class="btn qbtn off" style="padding-right:3px"><svg width="16" height="16"><use href="#i-pencilg"/></svg>Edit</button>
        <button class="btn qbtn off" style="padding-right:3px"><svg width="16" height="16" viewBox="0 0 16 16" style="margin-right:2px"><path d="M2 1h7v10l-3 3-4-3z" fill="#ddd" stroke="#aaa"/><path d="M5 2h6v10l-3 3-3-3z" fill="#ddd" stroke="#888"/><path d="M5 6h6M5 9l6-2M5 12l6-2" stroke="#777"/></svg>Duplicate</button>
        <button class="btn qbtn off" style="padding-right:3px"><svg width="16" height="16" viewBox="0 0 16 16"><path d="M8 .8L14.500 8H11v7H5V8H1.500z" fill="#999" stroke="#808080"/></svg>Move up</button>
        <button class="btn qbtn off" style="padding-right:3px"><svg width="16" height="16" viewBox="0 0 16 16"><path d="M8 15.200L14.500 8H11V1H5v7H1.500z" fill="#999" stroke="#808080"/></svg>Move down</button>
      </div>
    </div>
    <button class="btn qbtn off align-self-start justify-content-start" style="width:194px;padding-left:5px"><svg width="14" height="16" viewBox="0 0 14 16" style="margin-right:1px"><path d="M2 1h10v2l-2 1-1 4H5L4 4 2 3zM1 15h12" fill="#ddd" stroke="#999" stroke-width="1.200"/><path d="M5.500 6l3-1M6 8l2-1M7 8v7" stroke="#777" stroke-width="1.300"/></svg>Create Tool Controller(s)</button>
    <div class="d-flex justify-content-end" style="gap:6px">
      <button class="btn qbtn w80"><svg width="16" height="16" class="gap-icon"><use href="#i-stop"/></svg><span><u>A</u>nnuler</span></button>
      <button class="btn qbtn dflt w80"><svg width="16" height="16"><use href="#i-ok"/></svg><span><u>O</u>K</span></button>
    </div>
  </div>
</div>

<div class="win win-editor">
  <div class="title-bar">Tool Editor<svg class="close-dot" width="19" height="19" viewBox="0 0 19 19"><circle cx="9.500" cy="9.500" r="9" fill="#e95420"/><path d="M6 6l7 7M13 6l-7 7" stroke="#fff" stroke-width="1.500"/></svg></div>
  <div class="d-flex flex-column" style="padding:32px 11px 0 32px">
    <div style="height:18px;margin-left:-1px">Tool</div>
    <div class="grp d-flex flex-column" style="height:137px;padding:10px 11px 0 10px;gap:5px">
      <div class="d-flex align-items-center"><span style="width:88px">Name</span><div class="fld flex-grow-1" style="height:24px">Default tool</div></div>
      <div class="d-flex align-items-center"><span style="width:88px">Type</span><div class="combo flex-grow-1" style="height:24px;padding-left:4px">EndMill<i class="caret"></i></div></div>
      <div class="d-flex align-items-center"><span style="width:88px">Material</span><div class="combo flex-grow-1" style="height:24px;padding-left:4px">Carbide<i class="caret"></i></div></div>
      <div class="d-flex align-items-center"><span style="width:88px">Length Offset</span><div class="fld flex-grow-1" style="height:27px">0,00 mm<svg width="20" height="20" class="ms-auto mt-1"><use href="#i-check"/></svg></div></div>
    </div>
    <div style="height:25px;margin-left:-1px;padding-top:7px">Tool Parameter</div>
    <div class="grp d-flex" style="height:320px">
      <div class="d-flex flex-column" style="padding:19px 0 0 19px;gap:12px">
        <div class="d-flex align-items-center"><span style="width:33px">D =</span><div class="fld" style="height:27px;width:247px">3,00 mm<svg width="20" height="20" class="ms-auto mt-1"><use href="#i-check"/></svg></div></div>
        <div class="d-flex align-items-center"><span style="width:33px">H =</span><div class="fld" style="height:27px;width:247px">10,00 mm<svg width="20" height="20" class="ms-auto mt-1"><use href="#i-check"/></svg></div></div>
        <div class="d-flex align-items-center" style="color:#bdbdbd"><span style="width:33px">S =</span><div class="fld" style="height:27px;width:247px;background:#efefef">0,00 mm<svg width="20" height="20" class="ms-auto mt-1"><use href="#i-checkg"/></svg></div></div>
      </div>
      <svg width="215" height="315" viewBox="1000 417 215 315" style="margin-left:16px">
        <path d="M1012 578h148v78h-148z" fill="#ccc"/>
        <path d="M1049 578h74" stroke="#556" stroke-width="1"/>
        <g stroke="#333" stroke-width="1.200"><path d="M1049 448v39M1123 448v39M1049 460.500h74M1160 578.500h24M1160 656.500h24M1172.500 578v78M1012 656v39M1160 656v39M1012 682.500h148" fill="none"/></g>
        <path d="M1086 473v196" stroke="#222" stroke-width="1.300" stroke-dasharray="10 3 1.500 3"/>
        <path d="M1049 578v-91h74v91h37v78h-148v-78z" fill="none" stroke="#000" stroke-width="3.400"/>
        <g font-family="DejaVu Serif,serif" font-size="34"><text x="1075" y="457" textLength="25" lengthAdjust="spacingAndGlyphs">S</text><text x="1180.500" y="632" textLength="27" lengthAdjust="spacingAndGlyphs">H</text><text x="1073" y="715" textLength="28" lengthAdjust="spacingAndGlyphs">D</text></g>
      </svg>
    </div>
    <div class="d-flex justify-content-end" style="gap:6px;padding-top:26px">
      <button class="btn qbtn w80"><svg width="16" height="16" class="gap-icon"><use href="#i-stop"/></svg><span><u>A</u>nnuler</span></button>
      <button class="btn qbtn dflt w80"><svg width="16" height="16"><use href="#i-ok"/></svg><span><u>O</u>K</span></button>
    </div>
  </div>
</div>
</body>
</html>
